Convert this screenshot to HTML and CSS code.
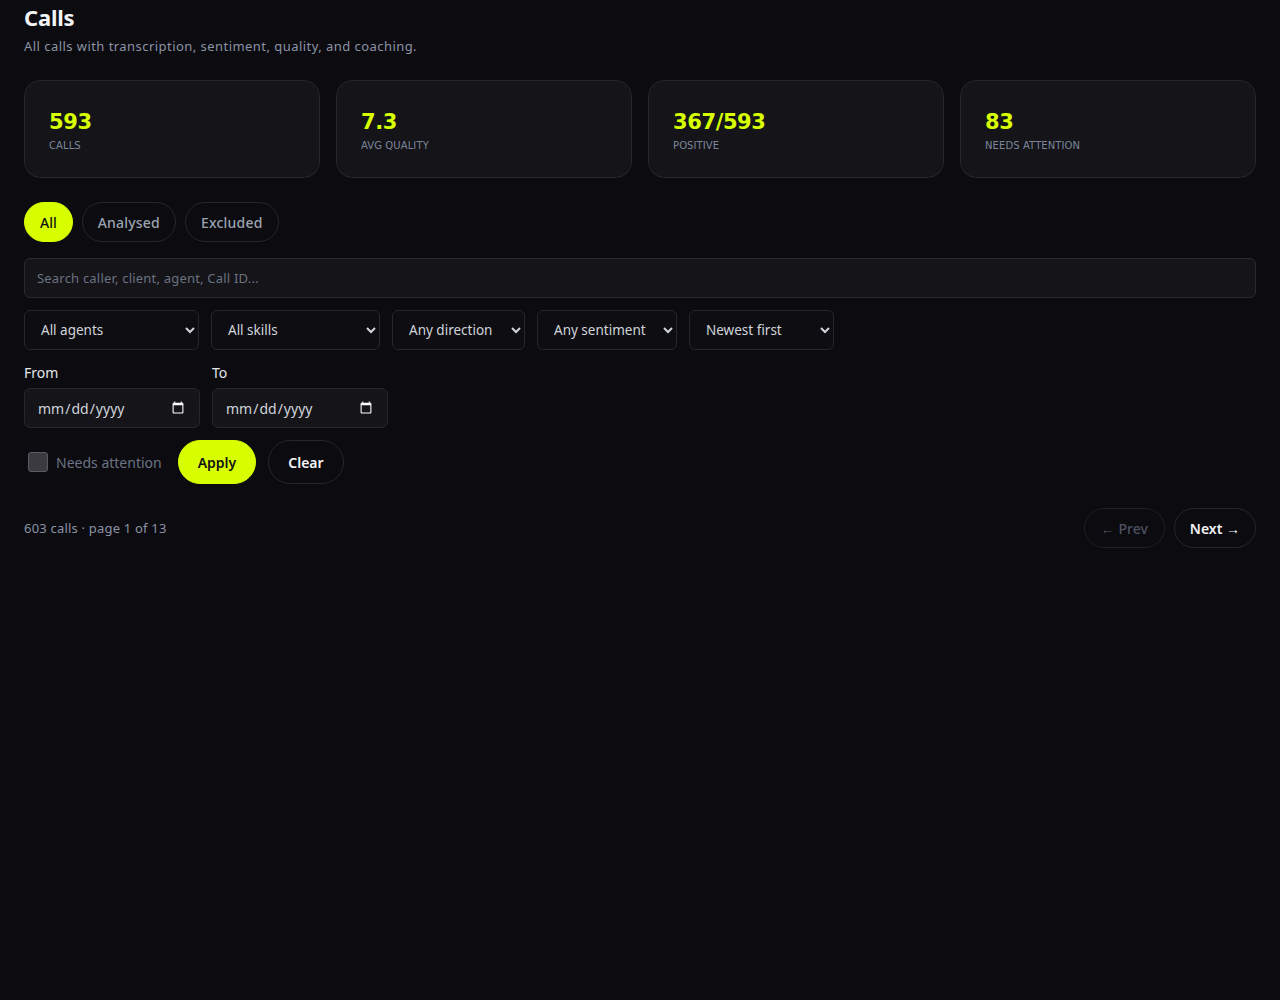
FILE: index.html
```html
<!DOCTYPE html>
<html lang="en">
<head>
<meta charset="utf-8">
<title>Calls</title>
<link rel="stylesheet" href="styles.css">
</head>
<body>
<main class="page">
  <header class="head">
    <h1 class="title">Calls</h1>
    <p class="subtitle">All calls with transcription, sentiment, quality, and coaching.</p>
  </header>

  <section class="stats">
    <div class="stat"><div class="stat-value">593</div><div class="stat-label">Calls</div></div>
    <div class="stat"><div class="stat-value">7.3</div><div class="stat-label">Avg quality</div></div>
    <div class="stat"><div class="stat-value">367/593</div><div class="stat-label">Positive</div></div>
    <div class="stat"><div class="stat-value">83</div><div class="stat-label">Needs attention</div></div>
  </section>

  <nav class="tabs">
    <button class="tab tab-active">All</button>
    <button class="tab">Analysed</button>
    <button class="tab">Excluded</button>
  </nav>

  <input class="search" type="text" placeholder="Search caller, client, agent, Call ID...">

  <div class="filters">
    <select class="sel w-agents"><option>All agents</option></select>
    <select class="sel w-skills"><option>All skills</option></select>
    <select class="sel w-dir"><option>Any direction</option></select>
    <select class="sel w-sent"><option>Any sentiment</option></select>
    <select class="sel w-sort"><option>Newest first</option></select>
  </div>

  <div class="dates">
    <label class="field"><span class="field-label">From</span><input class="date" type="date"></label>
    <label class="field"><span class="field-label">To</span><input class="date" type="date"></label>
  </div>

  <div class="actions">
    <label class="check"><span class="box"></span><span class="check-text">Needs attention</span></label>
    <button class="btn btn-primary">Apply</button>
    <button class="btn btn-ghost">Clear</button>
  </div>

  <div class="pager">
    <span class="pager-info">603 calls · page 1 of 13</span>
    <div class="pager-btns">
      <button class="pbtn pbtn-disabled">← Prev</button>
      <button class="pbtn">Next →</button>
    </div>
  </div>
</main>
</body>
</html>
```

FILE: styles.css
```css
* { box-sizing: border-box; }
html, body { margin: 0; padding: 0; }
body {
  background: #0b0b10;
  color: #e5e7eb;
  font-family: "Noto Sans", "Lato", sans-serif;
  color-scheme: dark;
  min-height: 1000px;
}
.page {
  padding: 0 24px;
  display: flex;
  flex-direction: column;
}
.head { padding-top: 3px; }
.title {
  margin: 0;
  font-size: 22px;
  line-height: 28px;
  font-weight: 700;
  color: #f3f4f6;
  letter-spacing: -0.2px;
}
.subtitle {
  margin: 6px 0 0;
  font-size: 13px;
  line-height: 18px;
  color: #8b93a5;
  letter-spacing: 0.45px;
}
.stats {
  margin-top: 25px;
  display: grid;
  grid-template-columns: repeat(4, 1fr);
  gap: 16px;
}
.stat {
  height: 98px;
  background: #141419;
  border: 1px solid #26262d;
  border-radius: 16px;
  padding: 28px 24px 0;
}
.stat-value {
  font-family: "DejaVu Sans", sans-serif;
  font-weight: 700;
  font-size: 21px;
  line-height: 26px;
  color: #d7ff00;
  letter-spacing: -0.4px;
}
.stat-label {
  margin-top: 4px;
  font-family: "DejaVu Sans", sans-serif;
  font-size: 10px;
  line-height: 14px;
  text-transform: uppercase;
  color: #7d8699;
  letter-spacing: 0.1px;
}
.tabs {
  margin-top: 24px;
  display: flex;
  gap: 9px;
}
.tab {
  height: 40px;
  padding: 0 15px;
  border-radius: 20px;
  border: 1px solid #26262d;
  background: #0b0b10;
  color: #9ca3af;
  font: 500 14px "Noto Sans", sans-serif;
  letter-spacing: 0.2px;
  cursor: pointer;
}
.tab-active {
  background: #d7ff00;
  border-color: #d7ff00;
  color: #111;
  letter-spacing: 0;
}
.search {
  margin-top: 16px;
  height: 40px;
  width: 100%;
  background: #141419;
  border: 1px solid #2a2a31;
  border-radius: 6px;
  padding: 0 12px;
  color: #e5e7eb;
  font: 13px "Noto Sans", sans-serif;
  letter-spacing: 0.2px;
}
.search::placeholder { color: #6b7280; }
.filters {
  margin-top: 12px;
  display: flex;
  gap: 12px;
}
.sel {
  height: 40px;
  background: #0d0d12;
  border: 1px solid #26262d;
  border-radius: 6px;
  padding: 0 12px;
  color: #d1d5db;
  font: 13.5px "Noto Sans", sans-serif;
}
.w-agents { width: 175px; }
.w-skills { width: 169px; }
.w-dir { width: 133px; }
.w-sent { width: 140px; }
.w-sort { width: 145px; }
.dates {
  margin-top: 14px;
  display: flex;
  gap: 12px;
}
.field {
  display: flex;
  flex-direction: column;
  gap: 6px;
}
.field-label {
  font-size: 14px;
  line-height: 18px;
  color: #e5e7eb;
}
.date {
  width: 176px;
  height: 40px;
  background: #141419;
  border: 1px solid #26262d;
  border-radius: 6px;
  padding: 0 12px;
  color: #d1d5db;
  font: 14px "Noto Sans", sans-serif;
}
.actions {
  margin-top: 12px;
  display: flex;
  align-items: center;
  gap: 12px;
}
.check {
  display: flex;
  align-items: center;
  gap: 8px;
  padding-left: 4px;
  margin-right: 4px;
}
.box {
  width: 20px;
  height: 20px;
  border-radius: 3px;
  background: #3a3a40;
  border: 1px solid #5a5a62;
}
.check-text {
  font-size: 14px;
  color: #6b7384;
}
.btn {
  height: 44px;
  padding: 0 19px;
  border-radius: 22px;
  font: 600 14px "Noto Sans", sans-serif;
  cursor: pointer;
}
.btn-primary {
  background: #d7ff00;
  border: 1px solid #d7ff00;
  color: #111;
}
.btn-ghost {
  background: #0b0b10;
  border: 1px solid #26262d;
  color: #f3f4f6;
}
.pager {
  margin-top: 24px;
  display: flex;
  align-items: center;
  justify-content: space-between;
}
.pager-info {
  font-size: 13px;
  color: #8b93a5;
  letter-spacing: 0.2px;
}
.pager-btns {
  display: flex;
  gap: 9px;
}
.pbtn {
  height: 40px;
  padding: 0 16px;
  border-radius: 20px;
  border: 1px solid #26262d;
  background: #0b0b10;
  color: #f3f4f6;
  font: 600 14px "Noto Sans", sans-serif;
}
.pbtn:last-child { padding: 0 15px; }
.pbtn-disabled {
  color: #4b5160;
  border-color: #1f1f25;
  font-weight: 500;
}
```
